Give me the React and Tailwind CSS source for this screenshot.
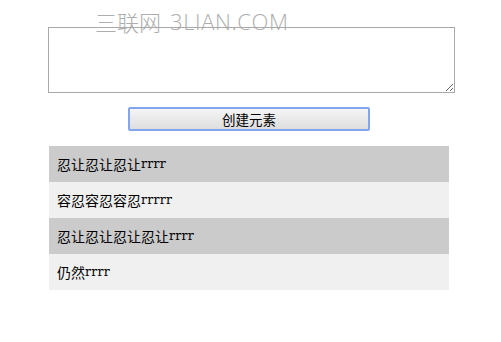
import React from "react";

export default function App() {
  const rows = [
    { c: "忍让忍让忍让", l: "rrrr", bg: "bg-[#cbcbcb]" },
    { c: "容忍容忍容忍", l: "rrrrr", bg: "bg-[#f0f0f0]" },
    { c: "忍让忍让忍让忍让", l: "rrrr", bg: "bg-[#cbcbcb]" },
    { c: "仍然", l: "rrrr", bg: "bg-[#f0f0f0]" },
  ];
  return (
    <div className="relative w-[501px] h-[342px] bg-white">
      <div className="pt-[27px] pl-[48px]">
        <textarea className="block w-[407px] h-[66px] border border-[#a9a9a9] bg-white resize" />
      </div>
      <div className="pt-[14px] pl-[128px]">
        <button className="w-[242px] h-[24px] border-2 border-[#7fa6ee] rounded-[2px] bg-gradient-to-b from-[#f5f5f5] to-[#dedede] text-[13.5px] text-black flex items-center justify-center [font-family:'Noto_Sans_CJK_SC',sans-serif]">
          创建元素
        </button>
      </div>
      <div className="pt-[15px] pl-[49px]">
        <div className="w-[400px] flex flex-col">
          {rows.map((r, i) => (
            <div
              key={i}
              className={`h-[36px] flex items-center pl-[8px] text-[14px] text-black ${r.bg} [font-family:'Noto_Sans_CJK_SC',sans-serif]`}
            >
              <span>{r.c}</span>
              <span className="text-[12.5px] tracking-[0.3px] [font-family:'DejaVu_Serif',serif] pt-[1px]">{r.l}</span>
            </div>
          ))}
        </div>
      </div>
      <div className="absolute left-[95px] top-[6px] text-[22px] leading-[30px] font-light text-[#a6a6a6] opacity-90 flex">
        <span className="[font-family:'Noto_Sans_CJK_SC',sans-serif]">三联网</span>
        <span className="ml-[9px] tracking-[0.6px] [font-family:'Open_Sans',sans-serif]">3LIAN.COM</span>
      </div>
    </div>
  );
}
